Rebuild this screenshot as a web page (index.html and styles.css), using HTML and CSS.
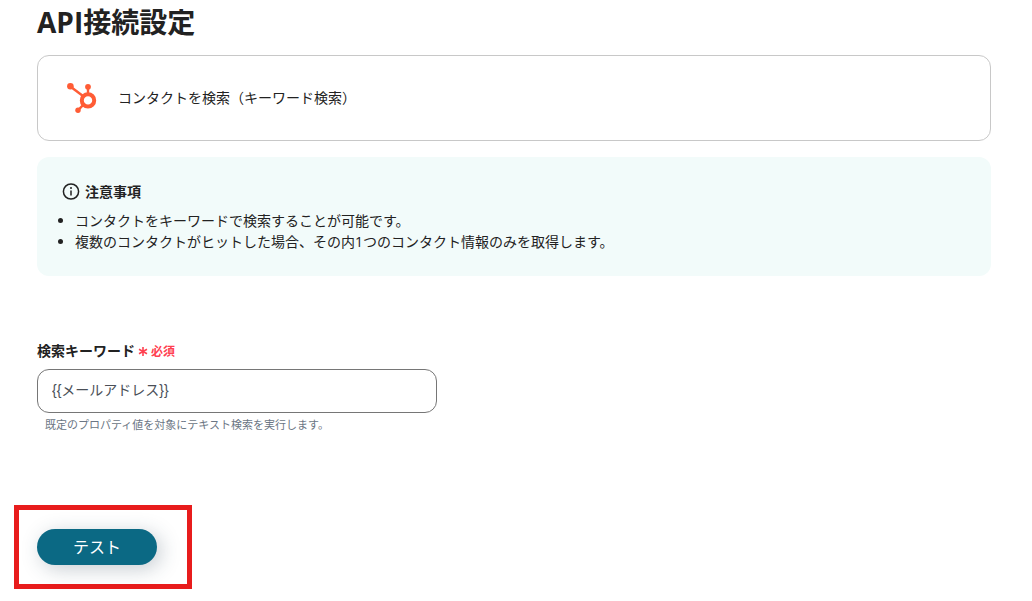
FILE: index.html
```html
<!DOCTYPE html>
<html lang="ja">
<head>
  <meta charset="UTF-8">
  <meta name="viewport" content="width=device-width, initial-scale=1">
  <title>API接続設定</title>
  <link rel="stylesheet" href="styles.css">
</head>
<body>
  <main class="page">
    <h1>API接続設定</h1>

    <div class="action-card">
      <svg class="logo" viewBox="0 0 32 32" aria-hidden="true">
        <g stroke="#ff5c35" fill="none">
          <path d="M5 6 L17 15" stroke-width="2.4"/>
          <path d="M22 6 V15" stroke-width="2.4"/>
          <path d="M12 29.3 L18 23" stroke-width="2.4"/>
          <circle cx="22" cy="19.4" r="6.2" stroke-width="4"/>
        </g>
        <g fill="#ff5c35">
          <circle cx="4.4" cy="5.2" r="3.3"/>
          <circle cx="22" cy="5.8" r="2.9"/>
          <circle cx="12" cy="29.3" r="2.7"/>
        </g>
      </svg>
      <span>コンタクトを検索（キーワード検索）</span>
    </div>

    <section class="notice">
      <h2>
        <svg class="info-icon" viewBox="0 0 18 18" aria-hidden="true">
          <circle cx="9" cy="8.5" r="7.6" fill="none" stroke="#222" stroke-width="1.5"/>
          <path d="M9 7.5 V12.5" stroke="#222" stroke-width="1.5"/>
          <circle cx="9" cy="5.1" r="1" fill="#222"/>
        </svg>
        注意事項
      </h2>
      <ul>
        <li>コンタクトをキーワードで検索することが可能です。</li>
        <li>複数のコンタクトがヒットした場合、その内1つのコンタクト情報のみを取得します。</li>
      </ul>
    </section>

    <form>
      <div class="field">
        <label for="keyword">
          検索キーワード
          <span class="required">
            <svg class="asterisk" viewBox="0 0 10 10" aria-hidden="true">
              <path d="M5 1 V10 M1 3.3 L9 7.7 M9 3.3 L1 7.7" stroke="#ff4050" stroke-width="1.6"/>
            </svg>
            必須
          </span>
        </label>
        <input type="text" id="keyword" value="{{メールアドレス}}">
        <p class="help">既定のプロパティ値を対象にテキスト検索を実行します。</p>
      </div>

      <div class="test-area">
        <button type="button">テスト</button>
      </div>
    </form>
  </main>
</body>
</html>
```

FILE: styles.css
```css
* {
  box-sizing: border-box;
}

body {
  margin: 0;
  background: #fff;
  color: #222;
  font-family: "Open Sans", "Noto Sans CJK JP", sans-serif;
  font-size: 14px;
  line-height: 21px;
}

.page {
  padding: 2px 41px 12px 37px;
}

h1 {
  margin: 0 0 13px;
  font-size: 28px;
  line-height: 40px;
}

.action-card {
  display: flex;
  align-items: center;
  gap: 20px;
  min-height: 86px;
  padding: 16px 28px 18px;
  border: 1px solid #c8c8c8;
  border-radius: 12px;
}

.logo {
  width: 32px;
  height: 32px;
}

.notice {
  margin-top: 16px;
  padding: 24px 24px 24px 20px;
  border-radius: 12px;
  background: #f2fbfa;
}

.notice h2 {
  display: flex;
  align-items: center;
  gap: 5px;
  margin: 0 0 8px 5px;
  font-size: 14px;
  line-height: 21px;
}

.info-icon {
  width: 18px;
  height: 18px;
}

.notice ul {
  margin: 0;
  padding-left: 18px;
}

.field {
  margin-top: 64px;
}

.field label {
  display: flex;
  align-items: baseline;
  gap: 3px;
  margin-bottom: 7px;
  font-weight: bold;
}

.required {
  display: flex;
  align-items: center;
  gap: 3px;
  color: #ff4050;
  font-size: 12px;
}

.asterisk {
  width: 10px;
  height: 10px;
}

.field input {
  display: block;
  width: 100%;
  max-width: 400px;
  height: 44px;
  padding: 0 14px 3px;
  border: 1px solid #767676;
  border-radius: 12px;
  background: #fff;
  color: #4a4f57;
  font-family: "Liberation Sans", "Noto Sans CJK JP", sans-serif;
  font-size: 14px;
}

.help {
  margin: 4px 8px 0;
  color: #6b7684;
  font-size: 11px;
  line-height: 16px;
}

.test-area {
  width: fit-content;
  margin: 72px 0 0 -23px;
  padding: 19px 30px 19px 18px;
  border: 5px solid #e81c1c;
}

.test-area button {
  display: block;
  width: 120px;
  height: 36px;
  padding: 0 0 2px;
  border: none;
  border-radius: 18px;
  background: #0b6984;
  box-shadow: 4px 4px 20px rgba(40, 60, 80, 0.26);
  color: #fff;
  font-family: inherit;
  font-size: 16px;
  cursor: pointer;
}
```
